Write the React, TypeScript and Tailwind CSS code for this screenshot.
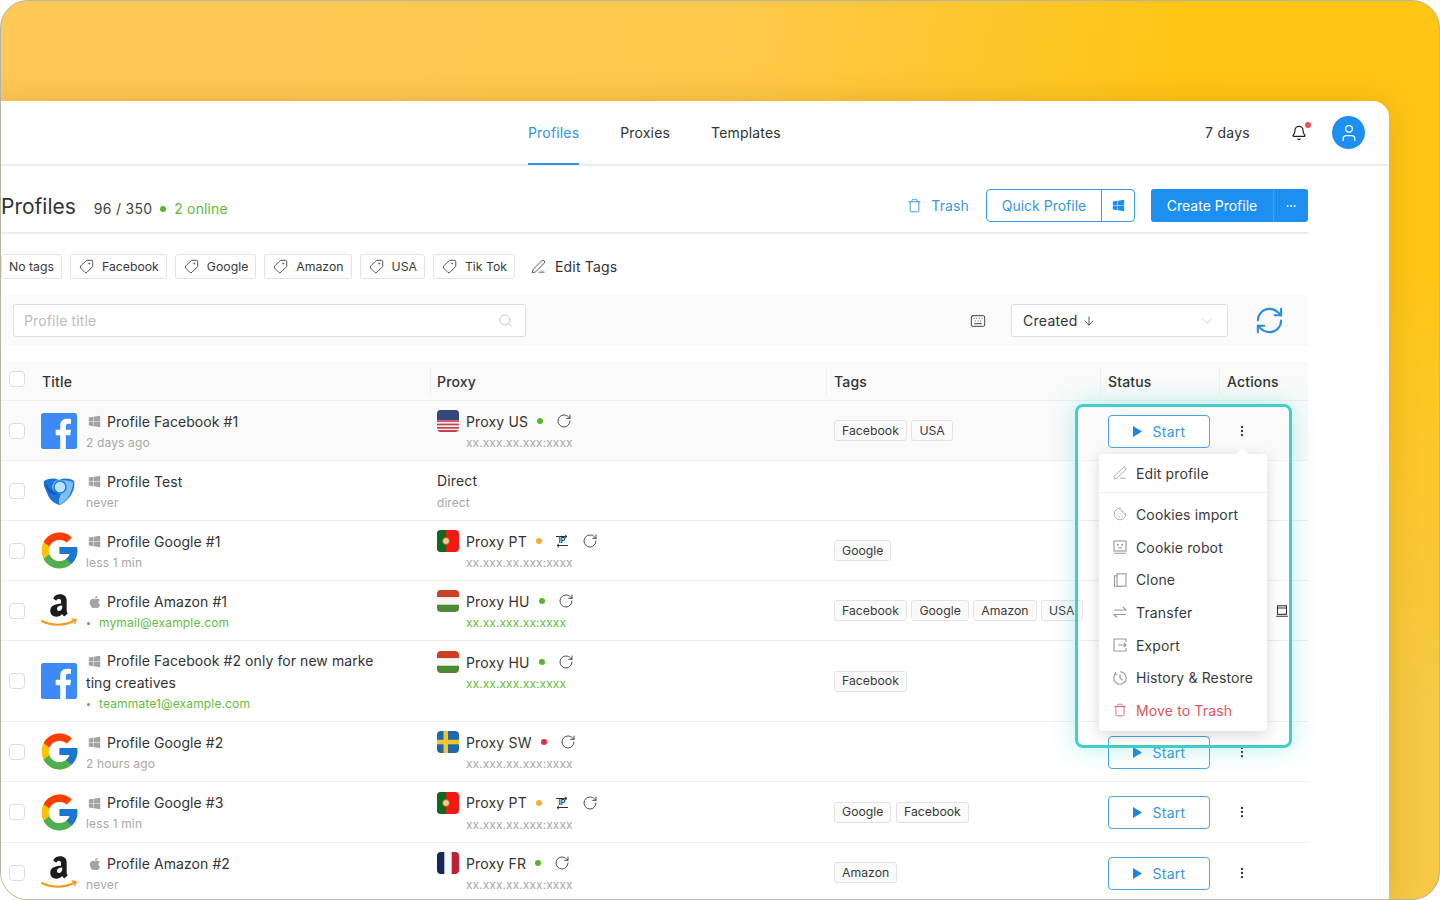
import React from "react";
import { Bell, User, Trash, Tag, PenLine, Search, Keyboard, ChevronDown, ArrowDown, RefreshCw, EllipsisVertical, Ellipsis, RotateCw, Cookie } from "lucide-react";
import { FaWindows, FaApple } from "react-icons/fa";
import { FcGoogle } from "react-icons/fc";

const Facebook = () => (
  <svg viewBox="0 0 36 36" className="w-9 h-9">
    <rect width="36" height="36" rx="2.5" fill="#3b8af5" />
    <path d="M24.8 36V22.2h4.5l.7-5.4h-5.2v-3.4c0-1.6.5-2.6 2.7-2.6H30V6c-.5-.1-2.1-.2-4-.2-4 0-6.8 2.4-6.8 7v4h-4.5v5.4h4.5V36z" fill="#fff" />
  </svg>
);
const Chromium = () => (
  <svg viewBox="0 0 36 36" className="w-9 h-9">
    <path d="M3 8c6-3 10-3 15-1 5-2 10-2 15 1 1 4 0 8-2 12-3 6-8 10-12 12-6-1-11-6-13-12C4 15 2 12 3 8z" fill="#1e74d6" />
    <path d="M14 8c5-2 12-1 18 1 0 4-1 8-3 12-2 5-6 8-10 11-2-3-1-7 1-11-4 0-7-2-9-6 0-3 1-5 3-7z" fill="#7cc0f5" />
    <path d="M4 9c3 6 7 10 14 11l-3 2C9 22 5 17 4 9z" fill="#0d5fc0" />
    <circle cx="19" cy="14" r="6" fill="#bfe3fb" stroke="#1a7fe0" strokeWidth="1.6" />
  </svg>
);
const Google = () => <FcGoogle className="w-[43px] h-[43px] shrink-0" />;
const Amazon = () => (
  <svg viewBox="0 0 36 36" className="w-9 h-9">
    <g transform="translate(-3 -4.500) scale(1.170)">
      <path d="M13 8.500c1-2.500 3.200-3.500 5.800-3.500 3.800 0 5.700 2 5.700 5.500v8.500c0 1 .4 1.500 1 2.200l-3 2.800c-.9-.7-1.500-1.500-1.900-2.200-1.400 1.600-2.900 2.300-4.900 2.300-3.200 0-5.200-2-5.200-5 0-4.500 4-6 9.200-6.100v-2c0-1.400-.6-2.300-1.900-2.300-1.100 0-1.800.6-2.100 1.700zm7.700 6.100c-3 .1-4.500 1-4.500 2.800 0 1.200.7 1.900 1.700 1.900 1.700 0 2.800-1.500 2.800-3.400z" fill="#1c1c1c" />
    </g>
    <path d="M1 28c9.500 5 22 5 33-.5" fill="none" stroke="#f59a1c" strokeWidth="2" strokeLinecap="round" />
    <path d="M31 26l4 .8-1.300 3.700" fill="none" stroke="#f59a1c" strokeWidth="1.400" strokeLinecap="round" />
  </svg>
);

const Flag = ({ c }: { c: string }) => (
  <svg viewBox="0 0 22 22" className="w-[22px] h-[22px] rounded-[4px] shrink-0">
    {c === "US" && (
      <g>
        <rect width="22" height="22" fill="#f4f4f6" />
        {[0, 3.4, 6.8, 10.2, 13.6, 17].map((y) => (
          <rect key={y} y={y} width="22" height="1.700" fill="#c9414f" />
        ))}
        <rect y="20" width="22" height="2" fill="#c9414f" />
        <rect width="22" height="10" fill="#33487c" />
      </g>
    )}
    {c === "PT" && (
      <g>
        <rect width="22" height="22" fill="#ef1a12" />
        <rect width="9" height="22" fill="#0a6b1f" />
        <circle cx="9" cy="11" r="3.500" fill="#f0d090" stroke="#b8552a" />
      </g>
    )}
    {c === "HU" && (
      <g>
        <rect width="22" height="7.300" fill="#cc3f22" />
        <rect y="7.300" width="22" height="7.400" fill="#f6f6f2" />
        <rect y="14.700" width="22" height="7.300" fill="#4d8a32" />
      </g>
    )}
    {c === "SW" && (
      <g>
        <rect width="22" height="22" fill="#1f69a8" />
        <rect x="6.500" width="4.500" height="22" fill="#f2c62f" />
        <rect y="8.800" width="22" height="4.500" fill="#f2c62f" />
      </g>
    )}
    {c === "FR" && (
      <g>
        <rect width="22" height="22" fill="#f5f5f7" />
        <rect width="7.300" height="22" fill="#12285a" />
        <rect x="14.700" width="7.300" height="22" fill="#bd1f38" />
      </g>
    )}
  </svg>
);

const IpIcon = () => (
  <svg viewBox="0 0 14 14" className="w-[14px] h-[14px]">
    <path d="M1 2.500h11M10 .8l2 1.700-2 1.700M13 11.500H2M4 9.800l-2 1.700 2 1.700" fill="none" stroke="#333" strokeWidth="1" />
    <text x="7" y="9.300" fontSize="7" fontWeight="700" textAnchor="middle" fill="#333" fontFamily="Inter">IP</text>
  </svg>
);

const gray = "#989898";
const RobotIcon = () => (
  <svg viewBox="0 0 14 14" className="w-[14px] h-[14px]" fill="none" stroke={gray} strokeWidth="1.100">
    <rect x="1" y="1" width="12" height="10" />
    <path d="M1 13.300h12M5 7.800h4" />
    <circle cx="4.800" cy="4.800" r=".5" />
    <circle cx="9.200" cy="4.800" r=".5" />
  </svg>
);
const CloneIcon = () => (
  <svg viewBox="0 0 14 14" className="w-[14px] h-[14px]" fill="none" stroke={gray} strokeWidth="1.100">
    <rect x="4" y=".8" width="9" height="12.400" />
    <path d="M4 2.800H1.500v10.900H9" />
  </svg>
);
const TransferIcon = () => (
  <svg viewBox="0 0 14 14" className="w-[14px] h-[14px]" fill="none" stroke={gray} strokeWidth="1.100">
    <path d="M1 5h12L10 2M13 9.500H1l3 3" />
  </svg>
);
const ExportIcon = () => (
  <svg viewBox="0 0 14 14" className="w-[14px] h-[14px]" fill="none" stroke={gray} strokeWidth="1.100">
    <path d="M13 4V1H1v12h12v-3M5 7h8M11 5l2 2-2 2" />
  </svg>
);
const HistoryIcon = () => (
  <svg viewBox="0 0 14 14" className="w-[14px] h-[14px]" fill="none" stroke={gray} strokeWidth="1.100">
    <path d="M7 .8a6.200 6.200 0 1 1-6.200 6.200c0-1.500.5-3 1.500-4M7 3.500V7l2.500 2" />
    <path d="M2.300 1v2.300h2.200" />
  </svg>
);
const DeviceIcon = () => (
  <svg viewBox="0 0 12 12" className="w-3 h-3" fill="none" stroke="#333" strokeWidth="1.100">
    <rect x="1.500" y=".8" width="9" height="8.500" />
    <path d="M1.500 3h9M.2 11.300h11.600" />
  </svg>
);

type Row = {
  h: string;
  logo: "fb" | "chromium" | "google" | "amazon";
  os: "win" | "mac";
  title: React.ReactNode;
  sub: string;
  email?: boolean;
  proxy?: string;
  flag?: string;
  dot?: string;
  ip?: boolean;
  addr: string;
  online?: boolean;
  tags: string[];
  device?: boolean;
  bg?: string;
};

const rows: Row[] = [
  { h: "h-[60px]", bg: "bg-[#fafafa]", logo: "fb", os: "win", title: "Profile Facebook #1", sub: "2 days ago", proxy: "Proxy US", flag: "US", dot: "bg-[#52b82a]", addr: "xx.xxx.xx.xxx:xxxx", tags: ["Facebook", "USA"] },
  { h: "h-[60px]", logo: "chromium", os: "win", title: "Profile Test", sub: "never", addr: "direct", tags: [] },
  { h: "h-[60px]", logo: "google", os: "win", title: "Profile Google #1", sub: "less 1 min", proxy: "Proxy PT", flag: "PT", dot: "bg-[#f5ae30]", ip: true, addr: "xx.xxx.xx.xxx:xxxx", tags: ["Google"] },
  { h: "h-[60px]", logo: "amazon", os: "mac", title: "Profile Amazon #1", sub: "mymail@example.com", email: true, proxy: "Proxy HU", flag: "HU", dot: "bg-[#52b82a]", addr: "xx.xx.xxx.xx:xxxx", online: true, tags: ["Facebook", "Google", "Amazon", "USA"], device: true },
  { h: "h-[81px]", logo: "fb", os: "win", title: <>Profile Facebook #2 only for new marke<br />ting creatives</>, sub: "teammate1@example.com", email: true, proxy: "Proxy HU", flag: "HU", dot: "bg-[#52b82a]", addr: "xx.xx.xxx.xx:xxxx", online: true, tags: ["Facebook"] },
  { h: "h-[60px]", logo: "google", os: "win", title: "Profile Google #2", sub: "2 hours ago", proxy: "Proxy SW", flag: "SW", dot: "bg-[#e0303f]", addr: "xx.xxx.xx.xxx:xxxx", tags: [] },
  { h: "h-[61px]", logo: "google", os: "win", title: "Profile Google #3", sub: "less 1 min", proxy: "Proxy PT", flag: "PT", dot: "bg-[#f5ae30]", ip: true, addr: "xx.xxx.xx.xxx:xxxx", tags: ["Google", "Facebook"] },
  { h: "h-[60px]", logo: "amazon", os: "mac", title: "Profile Amazon #2", sub: "never", proxy: "Proxy FR", flag: "FR", dot: "bg-[#52b82a]", addr: "xx.xxx.xx.xxx:xxxx", tags: ["Amazon"] },
];

const gridCols = "grid grid-cols-[34px_396px_396px_274px_119px_89px]";

const Checkbox = () => <span className="block w-4 h-4 rounded-[4px] border border-[#dcdcdc] bg-white" />;

const TagChip = ({ label, icon = true }: { label: string; icon?: boolean }) => (
  <div className="h-[25px] px-[7px] flex items-center gap-[8px] rounded-[3px] border border-[#e3e3e3] text-[12.25px] text-[#3a3a3a]">
    {icon && <Tag className="w-[15px] h-[15px] -scale-x-100 ml-[1px]" strokeWidth={1.4} />}
    <span className="pt-[1px]">{label}</span>
  </div>
);

const TableRow = ({ r }: { r: Row }) => (
  <div className={`${gridCols} ${r.h} ${r.bg ?? "bg-white"} border-b border-[#efefef]`}>
    <div className="flex items-center pl-[9px]"><Checkbox /></div>
    <div className="flex items-center pl-[7px]">
      <div className="w-9 h-9 flex items-center justify-center shrink-0">
        {r.logo === "fb" && <Facebook />}
        {r.logo === "chromium" && <Chromium />}
        {r.logo === "google" && <Google />}
        {r.logo === "amazon" && <Amazon />}
      </div>
      <div className="ml-[9px] pt-[2px] flex flex-col">
        <div className="text-[14px] leading-[22px] text-[#333] tracking-[0.005em]">
          {r.os === "win" ? (
            <FaWindows className="inline-block w-[13px] h-[13px] text-[#a3a3a3] ml-[2px] mr-[6px] -mt-[2px]" />
          ) : (
            <FaApple className="inline-block w-[14px] h-[14px] text-[#a3a3a3] ml-[2px] mr-[5px] -mt-[2px]" />
          )}
          {r.title}
        </div>
        <div className={`text-[12px] leading-[20px] tracking-[0.012em] ${r.email ? "text-[#62bd3d]" : "text-[#a8a8a8]"}`}>
          {r.email && <span className="inline-block w-[3px] h-[3px] rounded-full bg-[#52b82a] mr-[9px] ml-[1px] align-middle" />}
          {r.sub}
        </div>
      </div>
    </div>
    <div className={`pl-[7px] ${r.h === "h-[81px]" ? "pt-[10px]" : "flex flex-col justify-center pt-[2px]"}`}>
      {r.proxy ? (
        <div className="flex items-center h-[22px]">
          <Flag c={r.flag!} />
          <span className="ml-[7px] text-[14px] text-[#333] tracking-[0.012em]">{r.proxy}</span>
          <span className={`ml-[9px] w-[6px] h-[6px] rounded-full ${r.dot}`} />
          {r.ip && <span className="ml-[13px]"><IpIcon /></span>}
          <RotateCw className="ml-[13px] w-[16px] h-[16px] text-[#333]" strokeWidth={1.3} />
        </div>
      ) : (
        <div className="text-[14px] h-[22px] leading-[22px] text-[#333] tracking-[0.012em]">Direct</div>
      )}
      <div className={`${r.proxy ? "ml-[29px]" : ""} pt-[1px] text-[12px] leading-[20px] tracking-[0.005em] ${r.online ? "text-[#62bd3d]" : "text-[#a8a8a8]"}`}>{r.addr}</div>
    </div>
    <div className="flex items-center pl-[8px] gap-[4.500px]">
      {r.tags.map((t) => (
        <span key={t} className="h-[21px] px-[7px] pt-[1px] flex items-center rounded-[3px] border border-[#e3e3e3] bg-[#fafafa] text-[12.25px] text-[#3a3a3a]">{t}</span>
      ))}
    </div>
    <div className="flex items-center pl-[8px]">
      <div className="w-[102px] h-[33px] mt-[1px] rounded-[4px] border border-[#4da3ea] bg-white flex items-center justify-center gap-[11px] text-[14px] tracking-[0.02em] text-[#3a96e0]">
        <svg viewBox="0 0 10 12" className="w-[9px] h-[11px]"><path d="M0 0l10 6-10 6z" fill="#1f84db" /></svg>
        <span>Start</span>
      </div>
    </div>
    <div className="flex items-center pl-[16px]">
      <EllipsisVertical className="w-[14px] h-[14px] text-[#333]" strokeWidth={2} />
      {r.device && <span className="ml-[27px]"><DeviceIcon /></span>}
    </div>
  </div>
);

const menu: { label: string; icon: React.ReactNode }[] = [
  { label: "Cookies import", icon: <Cookie className="w-[14px] h-[14px] text-[#989898]" strokeWidth={1.3} /> },
  { label: "Cookie robot", icon: <RobotIcon /> },
  { label: "Clone", icon: <CloneIcon /> },
  { label: "Transfer", icon: <TransferIcon /> },
  { label: "Export", icon: <ExportIcon /> },
  { label: "History & Restore", icon: <HistoryIcon /> },
];

export default function App() {
  return (
    <div className="w-[1440px] h-[900px] overflow-hidden bg-white font-['Inter',sans-serif]">
      <div className="relative w-full h-full rounded-[28px] overflow-hidden border border-[#b8b3a2] bg-[linear-gradient(180deg,transparent_30%,#f6c845_80%),linear-gradient(100deg,#fec857_0%,#fec84c_45%,#ffc514_75%,#ffc617_100%)] pt-[100px]">
        <div className="-ml-px w-[1389px] h-[800px] bg-white rounded-tr-[16px] shadow-[0_0_30px_rgba(170,120,0,0.32)] overflow-hidden">
          {/* Top nav */}
          <div className="relative h-[65px] border-b-2 border-[#ececec] flex items-center">
            <div className="absolute left-[528px] top-0 h-[64px] flex gap-[41px] text-[14px] tracking-[0.012em] text-[#333]">
              <div className="relative flex items-center pb-[2px] text-[#2e96ea] h-full">
                Profiles
                <span className="absolute left-0 right-0 bottom-0 h-[2px] bg-[#2e96ea]" />
              </div>
              <div className="flex items-center pb-[2px]">Proxies</div>
              <div className="flex items-center pb-[2px]">Templates</div>
            </div>
            <div className="ml-auto flex items-center pr-[24px] text-[14px] text-[#333]">
              <span className="tracking-[0.02em]">7 days</span>
              <div className="relative ml-[41px] mr-[25px]">
                <Bell className="w-[16px] h-[16px] text-[#222]" strokeWidth={1.8} />
                <span className="absolute -top-[3px] right-[-4px] w-[6px] h-[6px] rounded-full bg-[#ee4d55]" />
              </div>
              <div className="w-[33px] h-[33px] rounded-full bg-[#1d8ff0] flex items-center justify-center">
                <User className="w-[20px] h-[20px] text-white" strokeWidth={1.5} />
              </div>
            </div>
          </div>

          <div className="w-[1308px]">
            {/* Title row */}
            <div className="h-[68px] pt-[13px] border-b-2 border-[#ececec] flex items-center">
              <div className="flex items-baseline mt-[3px] ml-[1px]">
                <span className="text-[21px] text-[#333]">Profiles</span>
                <span className="ml-[18px] text-[14px] text-[#444] tracking-[0.02em]">96 / 350</span>
                <span className="ml-[8px] mr-[8px] w-[6px] h-[6px] rounded-full bg-[#52b82a] self-center mt-[3px]" />
                <span className="text-[14px] text-[#5fba37] tracking-[0.01em]">2 online</span>
              </div>
              <div className="ml-auto flex items-center">
                <Trash className="w-[15px] h-[15px] text-[#2e96ea]" strokeWidth={1.5} />
                <span className="ml-[9px] text-[14px] text-[#3c95dc] tracking-[0.01em]">Trash</span>
                <div className="ml-[17px] h-[33px] w-[149px] rounded-[4px] border border-[#3c9be8] flex text-[14px] text-[#3c95dc]">
                  <div className="w-[115px] border-r border-[#3c9be8] flex items-center justify-center">Quick Profile</div>
                  <div className="flex-1 flex items-center justify-center"><FaWindows className="w-[13px] h-[13px] text-[#1d8ff0]" /></div>
                </div>
                <div className="ml-[16px] h-[33px] w-[157px] rounded-[3px] bg-[#1d8ff0] flex text-[14px] text-white">
                  <div className="w-[123px] border-r border-[#4aa6f2] flex items-center justify-center">Create Profile</div>
                  <div className="flex-1 flex items-center justify-center"><Ellipsis className="w-[12px] h-[12px]" /></div>
                </div>
              </div>
            </div>

            {/* Tags */}
            <div className="mt-[20px] flex items-center gap-[8px] pl-[1px]">
              <TagChip label="No tags" icon={false} />
              <TagChip label="Facebook" />
              <TagChip label="Google" />
              <TagChip label="Amazon" />
              <TagChip label="USA" />
              <TagChip label="Tik Tok" />
              <div className="ml-[8px] flex items-center gap-[9px] text-[14px] tracking-[0.012em] text-[#333]">
                <PenLine className="w-[15px] h-[15px]" strokeWidth={1.3} />
                <span>Edit Tags</span>
              </div>
            </div>

            {/* Filter bar */}
            <div className="mt-[16px] h-[51px] ml-[3px] pl-[10px] bg-[#fafafa] flex items-center">
              <div className="w-[513px] h-[33px] bg-white rounded-[3px] border border-[#dedede] flex items-center pl-[10px] pr-[12px] text-[14px] tracking-[0.01em] text-[#bdbdbd]">
                <span>Profile title</span>
                <Search className="ml-auto w-[15px] h-[15px] text-[#c4c4c4]" strokeWidth={1.5} />
              </div>
              <Keyboard className="ml-auto w-[16px] h-[16px] text-[#444]" strokeWidth={1.5} />
              <div className="ml-[25px] w-[217px] h-[33px] bg-white rounded-[3px] border border-[#dedede] flex items-center pl-[11px] pr-[11px] text-[14px] tracking-[0.02em] text-[#333]">
                <span>Created</span>
                <ArrowDown className="ml-[4px] w-[14px] h-[14px]" strokeWidth={1.4} />
                <ChevronDown className="ml-auto w-[18px] h-[18px] text-[#c4c4c4]" strokeWidth={1.1} />
              </div>
              <RefreshCw className="ml-[26px] mr-[23px] w-[31px] h-[31px] text-[#2e8ce0]" strokeWidth={1.6} />
            </div>

            {/* Table */}
            <div className="mt-[16px]">
              <div className={`${gridCols} h-[39px] bg-[#fafafa] border-b border-[#efefef] text-[14px] font-medium tracking-[0.012em] text-[#333] items-center`}>
                <div className="pl-[9px] -mt-[4px]"><Checkbox /></div>
                <div className="pl-[8px]">Title</div>
                <div className="relative pl-[7px]">
                  <span className="absolute left-0 top-[-4px] bottom-[-4px] w-px bg-[#efefef]" />
                  Proxy
                </div>
                {["Tags", "Status", "Actions"].map((h) => (
                  <div key={h} className="relative pl-[8px]">
                    <span className="absolute left-0 top-[-4px] bottom-[-4px] w-px bg-[#efefef]" />
                    {h}
                  </div>
                ))}
              </div>
              {rows.map((r, i) => <TableRow key={i} r={r} />)}
            </div>
          </div>
        </div>

        {/* Highlight frame */}
        <div className="absolute left-[1074px] top-[403px] w-[217px] h-[344px] rounded-[8px] border-[3px] border-[#41cfc9] shadow-[0_0_26px_rgba(65,207,201,0.35)] pointer-events-none" />

        {/* Dropdown menu */}
        <div className="absolute left-[1098px] top-[453px] w-[168px] h-[277px] bg-white rounded-[4px] shadow-[0_4px_16px_rgba(0,0,0,0.16)] text-[14px] text-[#3a3a3a]">
          <span className="absolute left-[139px] -top-[4px] w-[9px] h-[9px] rotate-45 bg-white" />
          <div className="h-[38px] flex items-center gap-[9px] pl-[14px] border-b border-[#efefef] box-content">
            <PenLine className="w-[14px] h-[14px] text-[#989898]" strokeWidth={1.3} />
            <span className="tracking-[0.01em]">Edit profile</span>
          </div>
          <div className="pt-[5px]">
            {menu.map((m) => (
              <div key={m.label} className="h-[32.700px] flex items-center gap-[9px] pl-[14px]">
                {m.icon}
                <span className="tracking-[0.01em]">{m.label}</span>
              </div>
            ))}
            <div className="h-[32.700px] flex items-center gap-[9px] pl-[14px] text-[#e5535f]">
              <Trash className="w-[14px] h-[14px]" strokeWidth={1.4} />
              <span className="tracking-[0.01em]">Move to Trash</span>
            </div>
          </div>
        </div>
      </div>
    </div>
  );
}
